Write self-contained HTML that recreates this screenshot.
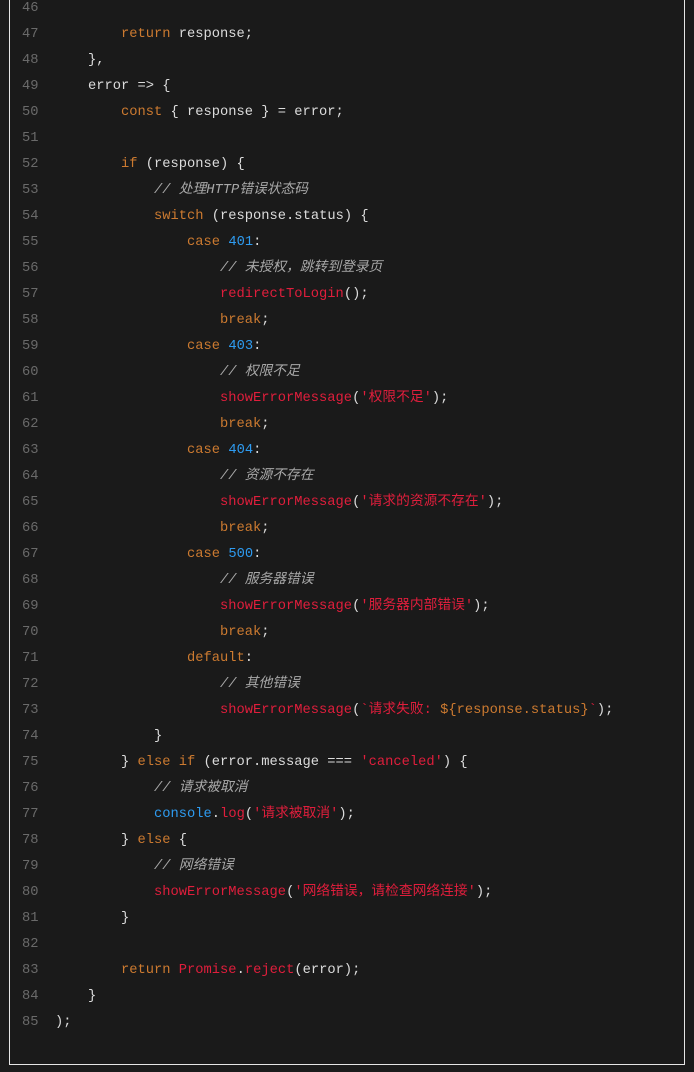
<!DOCTYPE html>
<html><head><meta charset="utf-8"><style>
html,body{margin:0;padding:0;background:#1b1b1b;width:694px;height:1072px;overflow:hidden}
.box{position:absolute;left:9px;top:-2px;width:674px;height:1066px;border:1px solid #e6e6e6;border-top:none;background:#1a1a1a}
.code{position:absolute;left:0;top:-4px;margin:0;font-family:"Liberation Mono","Noto Sans CJK SC",monospace;font-size:13.75px;line-height:26px;color:#dcdcdc}
.l{display:block;height:26px;white-space:pre}
.n{display:inline-block;width:55px;box-sizing:border-box;padding-left:22px;color:#6a6a6a}
.k{color:#cc7a30}.c{color:#a8a8a8;font-style:italic}.f{color:#e01e3c}.s{color:#e01e3c}.b{color:#2e9bf0}.t{color:#cc7a30}
</style></head><body><div class="box"></div>
<div class="code">
<div class="l"><span class="n">46</span></div>
<div class="l"><span class="n">47</span>        <span class="k">return</span> response;</div>
<div class="l"><span class="n">48</span>    },</div>
<div class="l"><span class="n">49</span>    error =&gt; {</div>
<div class="l"><span class="n">50</span>        <span class="k">const</span> { response } = error;</div>
<div class="l"><span class="n">51</span></div>
<div class="l"><span class="n">52</span>        <span class="k">if</span> (response) {</div>
<div class="l"><span class="n">53</span>            <span class="c">// 处理HTTP错误状态码</span></div>
<div class="l"><span class="n">54</span>            <span class="k">switch</span> (response.status) {</div>
<div class="l"><span class="n">55</span>                <span class="k">case</span> <span class="b">401</span>:</div>
<div class="l"><span class="n">56</span>                    <span class="c">// 未授权，跳转到登录页</span></div>
<div class="l"><span class="n">57</span>                    <span class="f">redirectToLogin</span>();</div>
<div class="l"><span class="n">58</span>                    <span class="k">break</span>;</div>
<div class="l"><span class="n">59</span>                <span class="k">case</span> <span class="b">403</span>:</div>
<div class="l"><span class="n">60</span>                    <span class="c">// 权限不足</span></div>
<div class="l"><span class="n">61</span>                    <span class="f">showErrorMessage</span>(<span class="s">'权限不足'</span>);</div>
<div class="l"><span class="n">62</span>                    <span class="k">break</span>;</div>
<div class="l"><span class="n">63</span>                <span class="k">case</span> <span class="b">404</span>:</div>
<div class="l"><span class="n">64</span>                    <span class="c">// 资源不存在</span></div>
<div class="l"><span class="n">65</span>                    <span class="f">showErrorMessage</span>(<span class="s">'请求的资源不存在'</span>);</div>
<div class="l"><span class="n">66</span>                    <span class="k">break</span>;</div>
<div class="l"><span class="n">67</span>                <span class="k">case</span> <span class="b">500</span>:</div>
<div class="l"><span class="n">68</span>                    <span class="c">// 服务器错误</span></div>
<div class="l"><span class="n">69</span>                    <span class="f">showErrorMessage</span>(<span class="s">'服务器内部错误'</span>);</div>
<div class="l"><span class="n">70</span>                    <span class="k">break</span>;</div>
<div class="l"><span class="n">71</span>                <span class="k">default</span>:</div>
<div class="l"><span class="n">72</span>                    <span class="c">// 其他错误</span></div>
<div class="l"><span class="n">73</span>                    <span class="f">showErrorMessage</span>(<span class="s">`请求失败: </span><span class="t">${response.status}</span><span class="s">`</span>);</div>
<div class="l"><span class="n">74</span>            }</div>
<div class="l"><span class="n">75</span>        } <span class="k">else if</span> (error.message === <span class="s">'canceled'</span>) {</div>
<div class="l"><span class="n">76</span>            <span class="c">// 请求被取消</span></div>
<div class="l"><span class="n">77</span>            <span class="b">console</span>.<span class="f">log</span>(<span class="s">'请求被取消'</span>);</div>
<div class="l"><span class="n">78</span>        } <span class="k">else</span> {</div>
<div class="l"><span class="n">79</span>            <span class="c">// 网络错误</span></div>
<div class="l"><span class="n">80</span>            <span class="f">showErrorMessage</span>(<span class="s">'网络错误，请检查网络连接'</span>);</div>
<div class="l"><span class="n">81</span>        }</div>
<div class="l"><span class="n">82</span></div>
<div class="l"><span class="n">83</span>        <span class="k">return</span> <span class="f">Promise</span>.<span class="f">reject</span>(error);</div>
<div class="l"><span class="n">84</span>    }</div>
<div class="l"><span class="n">85</span>);</div>
</div>
</body></html>
